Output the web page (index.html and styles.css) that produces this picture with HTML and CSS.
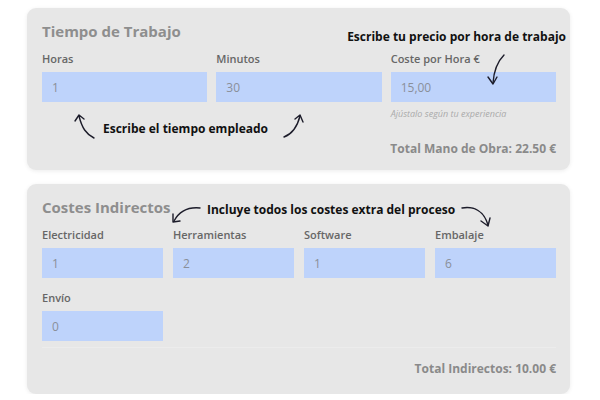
FILE: index.html
```html
<!DOCTYPE html>
<html lang="es">
<head>
    <meta charset="UTF-8">
    <title>Calculadora de Costes</title>
    <link rel="stylesheet" href="styles.css">
</head>
<body>
    <div class="page">
        <!-- Tiempo de trabajo -->
        <section class="card">
            <h2 class="card-title">Tiempo de Trabajo</h2>
            <div class="fields fields-3">
                <div class="field">
                    <label>Horas</label>
                    <input type="text" class="input-box" value="1">
                </div>
                <div class="field">
                    <label>Minutos</label>
                    <input type="text" class="input-box" value="30">
                </div>
                <div class="field">
                    <label>Coste por Hora €</label>
                    <input type="text" class="input-box" value="15,00">
                    <span class="hint">Ajústalo según tu experiencia</span>
                </div>
            </div>
            <div class="total">Total Mano de Obra: 22.50 €</div>

            <div class="note note-rate">Escribe tu precio por hora de trabajo</div>
            <svg class="arrow arrow-rate" width="24" height="34" viewBox="0 0 24 34">
                <path d="M19 2 C13 8 9 16 8 30" />
                <path d="M3 24 L8 31 L12 24" />
            </svg>

            <div class="note note-time">Escribe el tiempo empleado</div>
            <svg class="arrow arrow-time-l" width="24" height="28" viewBox="0 0 24 28">
                <path d="M20 26 C12 22 8 16 5 4" />
                <path d="M1 9 L5 3 L10 7" />
            </svg>
            <svg class="arrow arrow-time-r" width="24" height="28" viewBox="0 0 24 28">
                <path d="M2 25 C10 22 15 16 18 4" />
                <path d="M13 7 L18 3 L21 10" />
            </svg>
        </section>

        <!-- Costes indirectos -->
        <section class="card card-extra">
            <h2 class="card-title">Costes Indirectos</h2>
            <div class="fields fields-4">
                <div class="field">
                    <label>Electricidad</label>
                    <input type="text" class="input-box" value="1">
                </div>
                <div class="field">
                    <label>Herramientas</label>
                    <input type="text" class="input-box" value="2">
                </div>
                <div class="field">
                    <label>Software</label>
                    <input type="text" class="input-box" value="1">
                </div>
                <div class="field">
                    <label>Embalaje</label>
                    <input type="text" class="input-box" value="6">
                </div>
                <div class="field">
                    <label>Envío</label>
                    <input type="text" class="input-box" value="0">
                </div>
            </div>
            <div class="total total-line">Total Indirectos: 10.00 €</div>

            <div class="note note-extra">Incluye todos los costes extra del proceso</div>
            <svg class="arrow arrow-extra-l" width="32" height="20" viewBox="0 0 32 20">
                <path d="M30 3 C20 2 10 5 4 16" />
                <path d="M3 9 L3 17 L10 16" />
            </svg>
            <svg class="arrow arrow-extra-r" width="32" height="24" viewBox="0 0 32 24">
                <path d="M2 3 C14 1 24 6 28 20" />
                <path d="M21 16 L28 21 L30 13" />
            </svg>
        </section>
    </div>
</body>
</html>
```

FILE: styles.css
```css
* {
    margin: 0;
    padding: 0;
    box-sizing: border-box;
}

body {
    font-family: 'Open Sans', 'DejaVu Sans', sans-serif;
    background: #fff;
    color: #555;
}

.page {
    padding: 8px 30px 0 27px;
    display: flex;
    flex-direction: column;
    gap: 14px;
}

.card {
    position: relative;
    background-color: #e7e7e7;
    border-radius: 9px;
    box-shadow: 0 1px 4px rgba(0, 0, 0, 0.08);
    padding: 14px 14px 13px 15px;
}

.card-extra {
    padding-bottom: 17px;
}

.card-title {
    font-size: 15px;
    font-weight: 700;
    color: #8e8e8e;
    line-height: 18px;
    margin-bottom: 12px;
}

.fields {
    display: grid;
    column-gap: 9px;
    row-gap: 13px;
}

.fields-3 {
    grid-template-columns: repeat(3, 1fr);
}

.fields-4 {
    grid-template-columns: repeat(4, 1fr);
    column-gap: 10px;
}

.field label {
    display: block;
    font-size: 11px;
    font-weight: 600;
    color: #666;
    line-height: 14px;
    margin-bottom: 6px;
}

.input-box {
    display: block;
    width: 100%;
    height: 30px;
    border: none;
    outline: none;
    background-color: #bed3fb;
    padding: 0 10px;
    font-family: inherit;
    font-size: 12px;
    color: #8a8f99;
}

.hint {
    display: block;
    margin-top: 6px;
    font-size: 9px;
    line-height: 12px;
    font-style: italic;
    color: #aaa;
}

.total {
    text-align: right;
    font-size: 12px;
    line-height: 16px;
    font-weight: 700;
    color: #8a8a8a;
    margin-top: 21px;
}

.total-line {
    border-top: 1px solid #ececec;
    margin-top: 6px;
    padding-top: 13px;
}

.note {
    position: absolute;
    font-size: 12px;
    font-weight: 700;
    color: #111;
    white-space: nowrap;
}

.note-rate {
    top: 20px;
    right: 4px;
}

.note-time {
    top: 112px;
    left: 76px;
}

.note-extra {
    top: 17px;
    left: 180px;
}

.arrow {
    position: absolute;
    fill: none;
    stroke: #1c1c2a;
    stroke-width: 1.4;
    stroke-linecap: round;
    stroke-linejoin: round;
}

.arrow-rate {
    top: 45px;
    left: 458px;
}

.arrow-time-l {
    top: 104px;
    left: 47px;
}

.arrow-time-r {
    top: 104px;
    left: 255px;
}

.arrow-extra-l {
    top: 21px;
    left: 143px;
}

.arrow-extra-r {
    top: 21px;
    left: 433px;
}
```
